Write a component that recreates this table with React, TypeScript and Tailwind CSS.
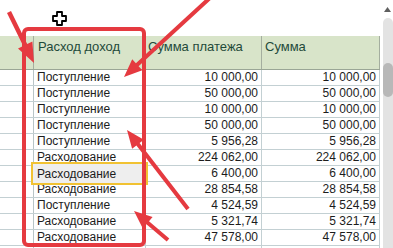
import React from "react";

type Row = { kind: string; a: string; b: string };

const rows: Row[] = [
  { kind: "Поступление", a: "10 000,00", b: "10 000,00" },
  { kind: "Поступление", a: "50 000,00", b: "50 000,00" },
  { kind: "Поступление", a: "10 000,00", b: "10 000,00" },
  { kind: "Поступление", a: "50 000,00", b: "50 000,00" },
  { kind: "Поступление", a: "5 956,28", b: "5 956,28" },
  { kind: "Расходование", a: "224 062,00", b: "224 062,00" },
  { kind: "Расходование", a: "6 400,00", b: "6 400,00" },
  { kind: "Расходование", a: "28 854,58", b: "28 854,58" },
  { kind: "Поступление", a: "4 524,59", b: "4 524,59" },
  { kind: "Расходование", a: "5 321,74", b: "5 321,74" },
  { kind: "Расходование", a: "47 578,00", b: "47 578,00" },
  { kind: "", a: "", b: "" },
];

function arrowPoints(
  tx: number,
  ty: number,
  hx: number,
  hy: number,
  w = 4,
  headLen = 18,
  headW = 15
) {
  const dx = hx - tx;
  const dy = hy - ty;
  const len = Math.hypot(dx, dy);
  const ux = dx / len;
  const uy = dy / len;
  const nx = -uy;
  const ny = ux;
  const bx = hx - ux * headLen;
  const by = hy - uy * headLen;
  const p = (x: number, y: number) => `${x.toFixed(1)},${y.toFixed(1)}`;
  return [
    p(tx + (nx * w) / 2, ty + (ny * w) / 2),
    p(bx + (nx * w) / 2, by + (ny * w) / 2),
    p(bx + (nx * headW) / 2, by + (ny * headW) / 2),
    p(hx, hy),
    p(bx - (nx * headW) / 2, by - (ny * headW) / 2),
    p(bx - (nx * w) / 2, by - (ny * w) / 2),
    p(tx - (nx * w) / 2, ty - (ny * w) / 2),
  ].join(" ");
}

export default function App() {
  return (
    <div
      className="relative w-[393px] h-[248px] overflow-hidden bg-white"
      style={{ fontFamily: '"Liberation Sans", Arial, sans-serif' }}
    >
      <div className="flex h-full">
        {/* table */}
        <div className="w-[380px] flex flex-col">
          <div className="h-[36px] shrink-0" />
          {/* header */}
          <div className="flex h-[34px] shrink-0 bg-[#d8e4c9] border-b border-[#9aa696] text-[13px] leading-[16px] text-[#1f4a3a]">
            <div className="w-[34px] border-r border-[#a4ae9f]" />
            <div className="w-[112px] border-r border-[#a4ae9f] pl-[4px] pt-[3px]">Расход доход</div>
            <div className="w-[116px] border-r border-[#a4ae9f] pl-[2px] pt-[3px]">Сумма платежа</div>
            <div className="w-[118px] border-r border-[#a4ae9f] pl-[3px] pt-[3px]">Сумма</div>
          </div>
          {/* rows */}
          {rows.map((r, i) => (
            <div
              key={i}
              className="flex h-[16px] shrink-0 border-b border-[#c3d0d3] text-[12px] leading-[15px] text-[#1c1c1c]"
            >
              <div className="w-[34px] border-r border-[#b9c5c7]" />
              <div className="w-[112px] border-r border-[#c3d0d3] pl-[3px] whitespace-nowrap">{r.kind}</div>
              <div className="w-[116px] border-r border-[#c3d0d3] pr-[3px] text-right whitespace-nowrap">{r.a}</div>
              <div className="w-[118px] border-r border-[#c3d0d3] pr-[3px] text-right whitespace-nowrap">{r.b}</div>
            </div>
          ))}
        </div>
        {/* scrollbar */}
        <div className="w-[13px] flex flex-col items-center pl-[2px]">
          <div className="h-[18px] flex items-center justify-center">
            <svg width="7" height="5" viewBox="0 0 7 5">
              <polygon points="3.5,0 7,5 0,5" fill="#5f5f5f" />
            </svg>
          </div>
          <div className="flex-1 w-[10px] rounded-t-full bg-[#e3e3e3] pt-[45px]">
            <div className="h-[34px] w-full rounded-full bg-[#b8b8b8]" />
          </div>
        </div>
      </div>

      {/* selected cell */}
      <div className="absolute left-[31px] top-[162px] w-[117px] h-[23px] border-2 border-[#f1c232] bg-[#eeeeee] flex items-center pl-[4px] text-[12px] text-[#1c1c1c]">
        Расходование
      </div>

      {/* red box */}
      <div className="absolute left-[22px] top-[27px] w-[124px] h-[220px] border-4 border-[#e53a40] rounded-[6px]" />

      {/* arrows */}
      <svg className="absolute left-0 top-0" width="393" height="248" viewBox="0 0 393 248">
        <polygon points={arrowPoints(9, 12, 34, 63, 4.5, 20, 16)} fill="#e53a40" />
        <polygon points={arrowPoints(212, -4, 124, 77)} fill="#e53a40" />
        <polygon points={arrowPoints(188, 209, 127, 130)} fill="#e53a40" />
        <polygon points={arrowPoints(168, 240, 134, 211)} fill="#e53a40" />
      </svg>

      {/* move cursor */}
      <svg className="absolute left-[52px] top-[11px]" width="15" height="15" viewBox="0 0 15 15">
        <path
          d="M5 1 H10 V5 H14 V10 H10 V14 H5 V10 H1 V5 H5 Z"
          fill="#ffffff"
          stroke="#000000"
          strokeWidth="1.8"
          strokeLinejoin="round"
        />
      </svg>
    </div>
  );
}
